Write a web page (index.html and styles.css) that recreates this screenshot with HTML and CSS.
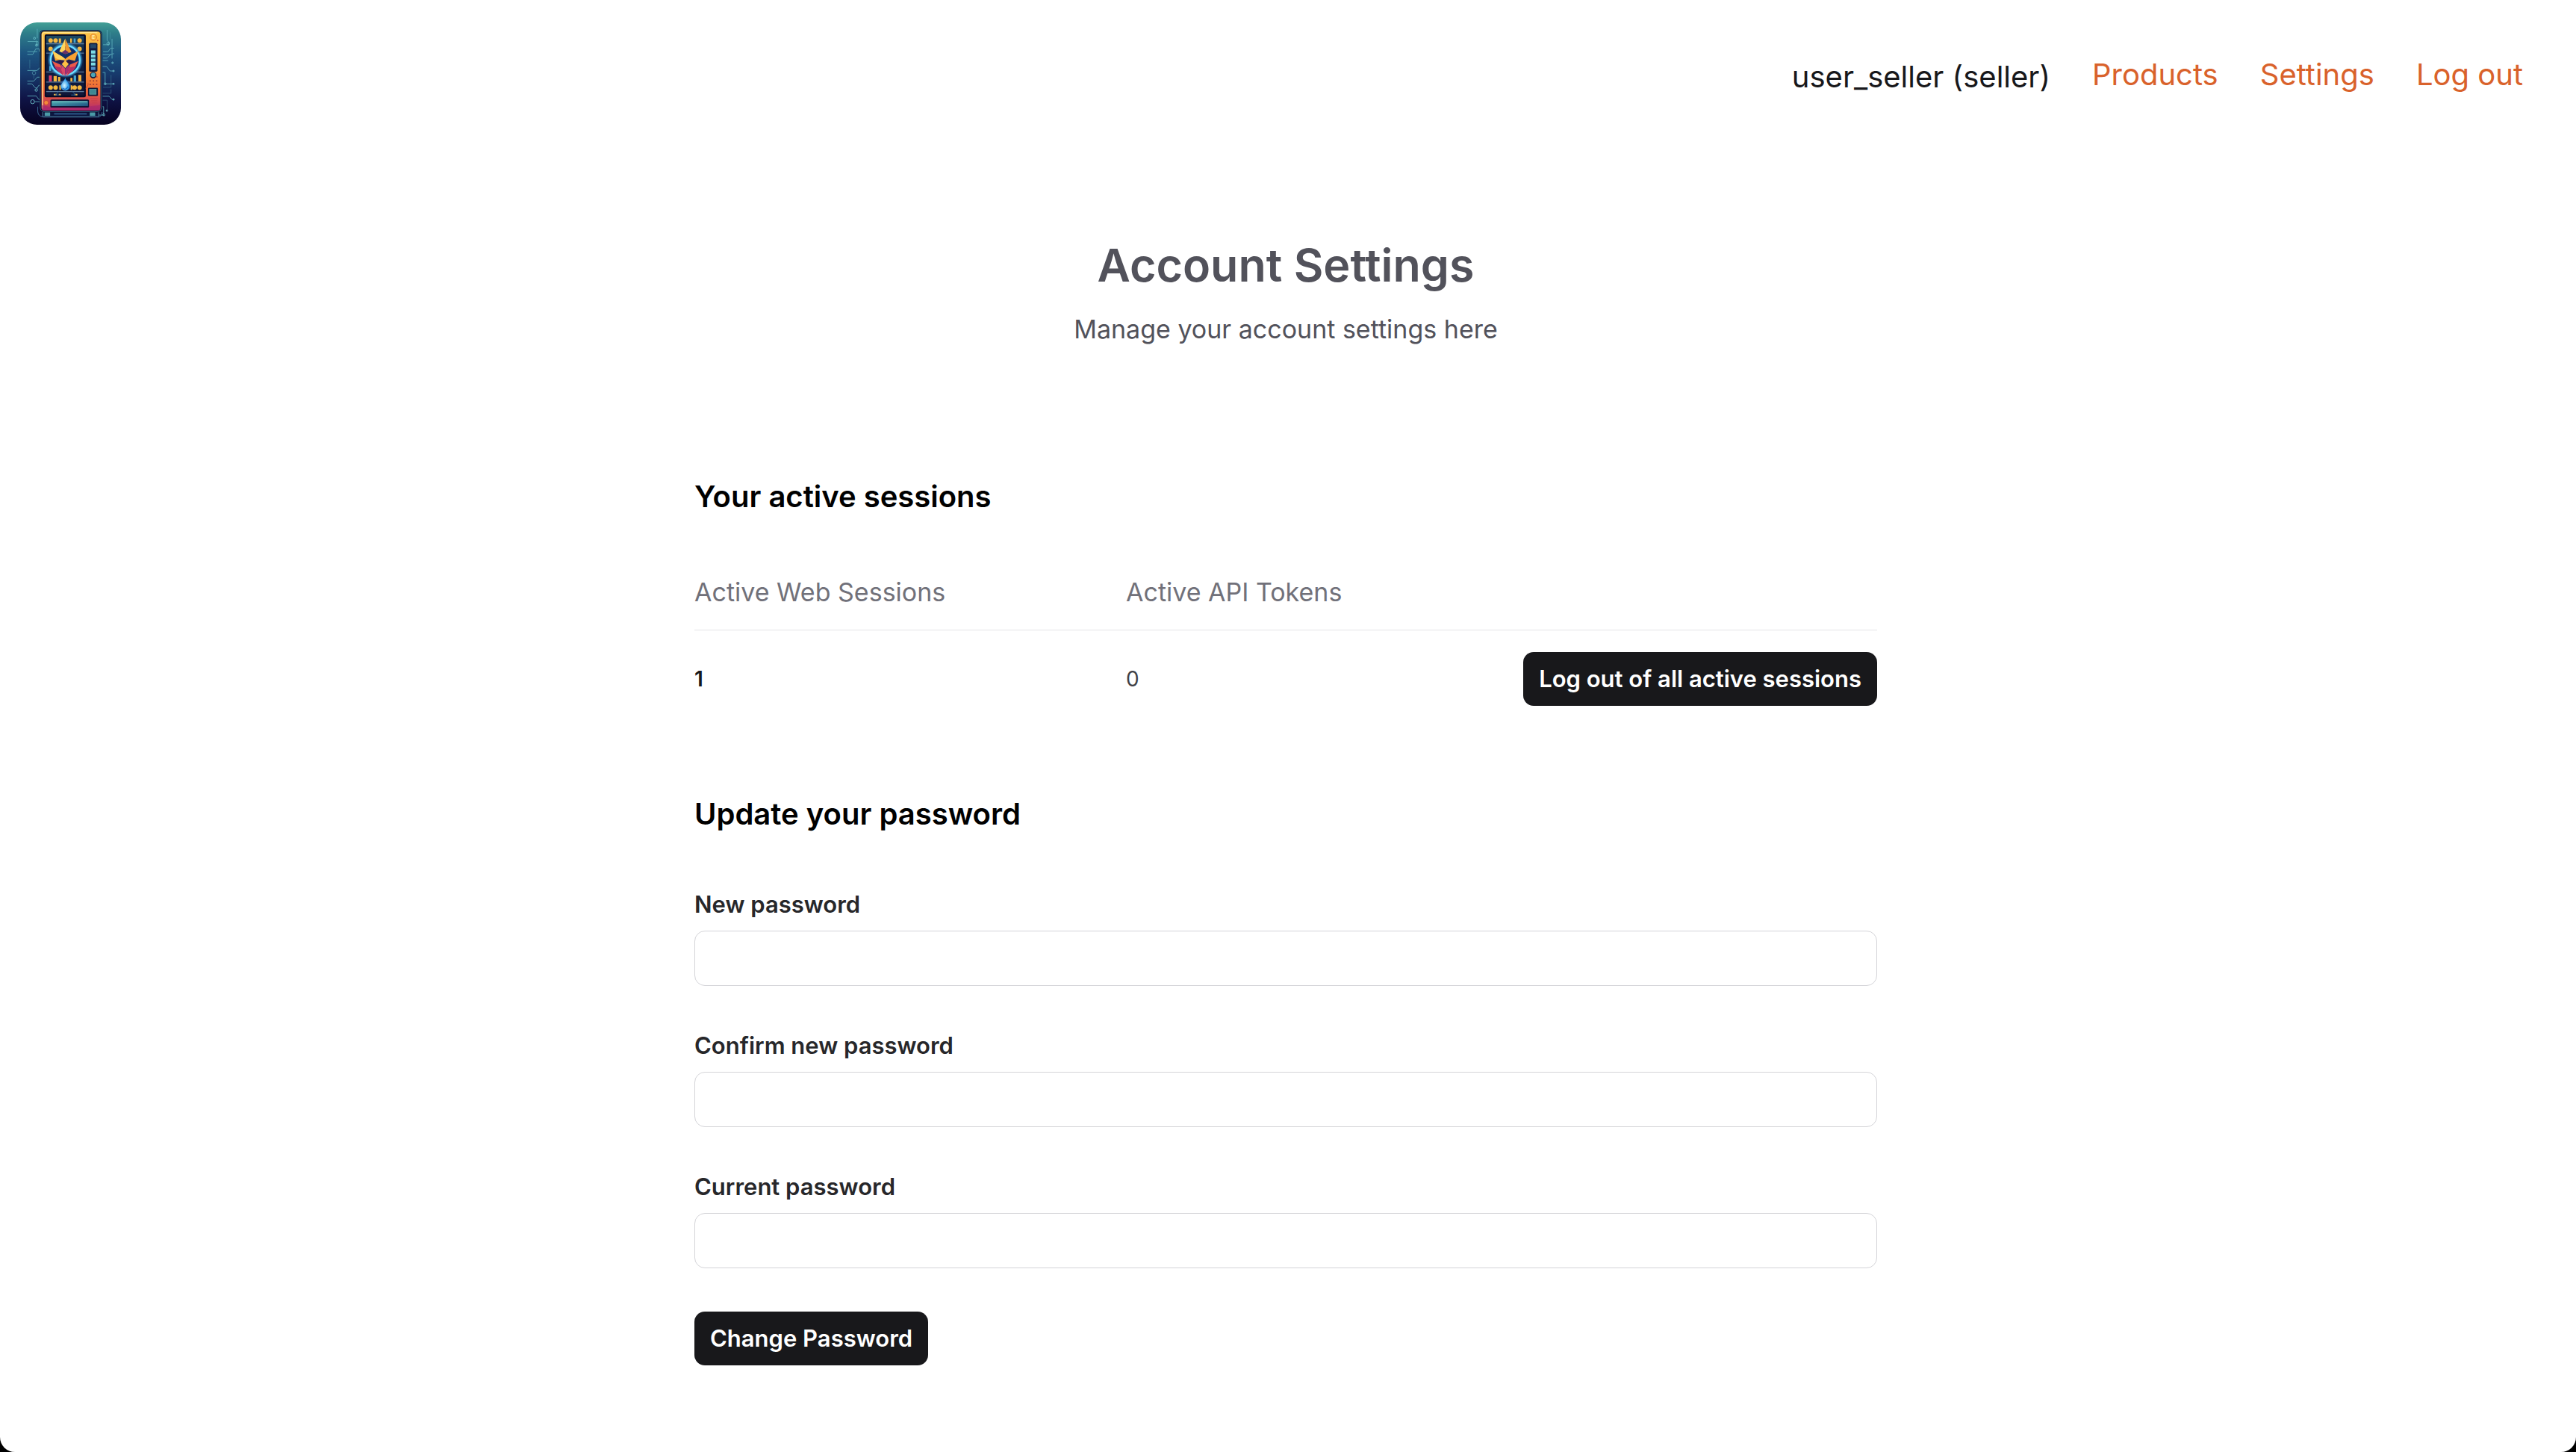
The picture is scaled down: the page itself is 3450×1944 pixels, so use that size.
FILE: index.html
```html
<!DOCTYPE html>
<html lang="en">
<head>
<meta charset="utf-8">
<meta name="viewport" content="width=device-width, initial-scale=1">
<title>Account Settings</title>
<link rel="stylesheet" href="styles.css">
</head>
<body>
<div class="page">
  <header class="site-header">
    <a class="logo" href="#" aria-label="Home">
      <svg viewBox="79 90 407 413" aria-hidden="true">
        <defs>
          <linearGradient id="sky" x1="0" y1="0" x2="0" y2="1">
            <stop offset="0" stop-color="#43a096"/>
            <stop offset=".1" stop-color="#2f7f8a"/>
            <stop offset=".3" stop-color="#1d5580"/>
            <stop offset=".5" stop-color="#173a6c"/>
            <stop offset=".75" stop-color="#0f1345"/>
            <stop offset="1" stop-color="#06011f"/>
          </linearGradient>
          <linearGradient id="case" x1="0" y1="0" x2="0" y2="1">
            <stop offset="0" stop-color="#fcc648"/>
            <stop offset=".45" stop-color="#f79a35"/>
            <stop offset=".75" stop-color="#ef6536"/>
            <stop offset="1" stop-color="#b52a6b"/>
          </linearGradient>
          <linearGradient id="glass" x1="0" y1="0" x2="0" y2="1">
            <stop offset="0" stop-color="#1d4a63"/>
            <stop offset=".3" stop-color="#0d2043"/>
            <stop offset="1" stop-color="#101638"/>
          </linearGradient>
          <linearGradient id="slot" x1="0" y1="0" x2="1" y2="1">
            <stop offset="0" stop-color="#4fb3b5"/>
            <stop offset="1" stop-color="#1f4f80"/>
          </linearGradient>
          <radialGradient id="glow">
            <stop offset=".55" stop-color="#1c6fc4" stop-opacity=".75"/>
            <stop offset=".82" stop-color="#58d3ff"/>
            <stop offset="1" stop-color="#2a8fe0" stop-opacity="0"/>
          </radialGradient>
          <radialGradient id="drop" cx=".4" cy=".6">
            <stop offset="0" stop-color="#d5f5ff"/>
            <stop offset="1" stop-color="#2397ea"/>
          </radialGradient>
        </defs>
        <rect x="79" y="90" width="407" height="413" rx="68" fill="url(#sky)"/>
        <g fill="none" stroke="#5fb1bd" stroke-width="3" opacity=".85">
          <path d="M148 116v38M109 167h42v17M144 184v-20M108 219h22l12-22h14M108 208h40M156 208v-12M108 284h40l10-12M108 327h26l14-16h10M108 338h18l14 16h6M146 358l8-14h6M108 387h36l10 14h8M138 410h22"/>
          <path d="M430 120v42l10 10M414 180h24v-10M412 220h26l20-4M450 156v80M414 208h20l10-14h14M414 234h16l14-14M412 244h22M412 268h16l14 18h14M412 292h10v44M422 338h34M412 388h26l12 13h8M412 430h4v32M396 464h20"/>
          <path d="M118 240v36M134 300v18M414 352h32v-50M412 376h34v-16M412 404h18v40M442 130v30" opacity=".4"/>
        </g>
        <g fill="none" stroke="#69bcc6" stroke-width="3">
          <circle cx="137" cy="154" r="4"/><circle cx="145" cy="182" r="4"/><circle cx="144" cy="363" r="5"/><circle cx="129" cy="410" r="8"/><circle cx="135" cy="294" r="7" opacity=".5"/>
          <circle cx="434" cy="176" r="5"/><circle cx="452" cy="253" r="3"/><circle cx="456" cy="286" r="3"/><circle cx="422" cy="338" r="4"/><circle cx="456" cy="338" r="3"/><circle cx="456" cy="401" r="3"/><circle cx="429" cy="446" r="3"/><circle cx="417" cy="463" r="4"/>
        </g>
        <path d="M150 430v18q0 20 22 24h226q12-4 12-20" fill="none" stroke="#3a6a93" stroke-width="3"/>
        <rect x="170" y="448" width="226" height="23" rx="4" fill="#0c1740" stroke="#5188a4" stroke-width="3"/>
        <rect x="178" y="451" width="22" height="16" fill="#4b9aa8"/><rect x="360" y="451" width="22" height="16" fill="#4b9aa8"/>
        <path d="M216 459h132" stroke="#294f80" stroke-width="7"/>
        <rect x="157" y="120" width="253" height="333" rx="18" fill="#0a0d2c"/>
        <rect x="160" y="123" width="247" height="327" rx="16" fill="none" stroke="#3f86a2" stroke-width="2"/>
        <rect x="165" y="127" width="238" height="319" rx="12" fill="url(#case)"/>
        <path d="M169 438V140q0-9 10-9h212" fill="none" stroke="#ffe18a" stroke-width="4"/>
        <path d="M166 424q70 22 236 0v14q0 8-12 8H178q-12 0-12-8z" fill="#a32770" opacity=".6"/>
        <rect x="178" y="138" width="166" height="254" rx="6" fill="#070a25"/>
        <rect x="184" y="144" width="153" height="241" fill="url(#glass)"/>
        <path d="M184 176h153M184 214h153M184 290h153M184 331h153M184 369h153" stroke="#5a7899" stroke-width="4"/>
        <g fill="#f4b73f">
          <circle cx="202" cy="163" r="9"/><circle cx="222" cy="163" r="9"/><circle cx="319" cy="163" r="9"/>
          <circle cx="202" cy="197" r="9"/><circle cx="319" cy="197" r="9"/>
          <circle cx="202" cy="353" r="9"/><circle cx="222" cy="353" r="9"/><circle cx="299" cy="353" r="9"/><circle cx="319" cy="353" r="9"/>
          <path d="M235 155h9v18h-9zM281 155h7v17h-7zM214 306h13v22h-13zM232 310h9v18h-9zM314 302h12v26h-12zM282 314h8v14h-8zM237 344h7v18h-7zM283 344h7v18h-7zM215 379h12v6h-12zM235 379h8v6h-8zM298 379h12v6h-12z"/>
        </g>
        <path d="M295 155h8v17h-8zM295 304h10v25h-10zM196 266h8v20h-8z" fill="#45a4cf"/>
        <path d="M195 304h12v25h-12z" fill="#df3e68"/>
        <circle cx="261" cy="242" r="72" fill="url(#glow)"/>
        <circle cx="261" cy="242" r="55" fill="#112f69"/>
        <circle cx="261" cy="242" r="59" fill="none" stroke="#70ddff" stroke-width="6"/>
        <path d="M261 155l-24 52 24 10z" fill="#ffd75b"/><path d="M261 155l25 55-25 7z" fill="#ee982e"/>
        <path d="M246 211l15-10 15 10-15 8z" fill="#693267"/>
        <path d="M208 246l34 14 14 46-26-20zM314 246l-34 14-14 46 26-20z" fill="#ed5949"/>
        <path d="M215 266l28 6 9 30-22-16zM307 266l-28 6-9 30 22-16z" fill="#b32f65"/>
        <path d="M210 205l40 24 11 9 11-9 41-24-13 40-25-6-14 8-14-8-26 6z" fill="#f9a232"/>
        <path d="M210 205l40 24 11 9-14 5-25-8z" fill="#ffd15a"/>
        <path d="M224 248l23-6 14 10 14-10 23 6-20 9-17-6-17 6z" fill="#321947"/>
        <path d="M261 243l-14 15 14 17 14-17z" fill="#ffc044"/>
        <path d="M245 260l16 17v31l-14-22z" fill="#db476a"/><path d="M277 260l-16 17v31l14-22z" fill="#a92d71"/>
        <circle cx="262" cy="344" r="22" fill="#257bce" opacity=".45"/>
        <path d="M261 314c5 15 17 22 17 34a17 17 0 0 1-34 0c0-12 12-19 17-34z" fill="url(#drop)"/>
        <path d="M250 355q12 12 22-6" fill="none" stroke="#176dc4" stroke-width="4"/>
        <path d="M234 369l-12 14h18M290 369l13 14h-18" fill="none" stroke="#25639a" stroke-width="3"/>
        <circle cx="375" cy="150" r="13" fill="#f9b540" stroke="#dd8134" stroke-width="3"/>
        <text x="375" y="157" class="logo-mark">E</text>
        <circle cx="392" cy="163" r="3" fill="#d95b35"/>
        <rect x="357" y="173" width="34" height="116" rx="5" fill="#101a3e"/>
        <rect x="362" y="178" width="24" height="16" fill="#24476a"/>
        <g fill="#7bdbe5"><rect x="365" y="203" width="18" height="13"/><rect x="365" y="220" width="18" height="12"/><rect x="365" y="236" width="18" height="12"/><rect x="365" y="252" width="18" height="12"/></g>
        <rect x="365" y="269" width="18" height="13" fill="#4e8fc9"/>
        <circle cx="374" cy="303" r="13" fill="#101a3e"/><circle cx="374" cy="302" r="9" fill="#4da5b6"/><circle cx="389" cy="310" r="3" fill="#d7472f"/>
        <g fill="#993e36"><circle cx="362" cy="326" r="3"/><circle cx="375" cy="326" r="3"/><circle cx="388" cy="326" r="3"/><circle cx="362" cy="340" r="3"/><circle cx="375" cy="340" r="3"/><circle cx="388" cy="340" r="3"/></g>
        <rect x="353" y="354" width="40" height="33" rx="4" fill="#101737"/><rect x="359" y="360" width="27" height="20" fill="#3e8792" stroke="#67b2ab" stroke-width="2"/>
        <path d="M353 335v8l-10 14" fill="none" stroke="#a24636" stroke-width="2"/>
        <path d="M362 397h30M366 406h24M370 415h20" stroke="#c93d4c" stroke-width="3"/>
        <circle cx="184" cy="414" r="9" fill="#f5893a" stroke="#c74b37" stroke-width="3"/>
        <rect x="201" y="401" width="156" height="33" rx="5" fill="#101438"/>
        <rect x="206" y="407" width="147" height="21" rx="2" fill="url(#slot)"/>
        <path d="M208 410h142" stroke="#82d1cc" stroke-width="3"/>
      </svg>
    </a>
    <nav class="nav" aria-label="Main">
      <span class="nav-user">user_seller (seller)</span>
      <a class="nav-link" href="#">Products</a>
      <a class="nav-link" href="#">Settings</a>
      <a class="nav-link" href="#">Log out</a>
    </nav>
  </header>

  <main class="content">
    <div class="intro">
      <h1 class="intro-title">Account Settings</h1>
      <p class="intro-text">Manage your account settings here</p>
    </div>

    <section class="sessions">
      <h2 class="section-title">Your active sessions</h2>
      <table class="session-table">
        <thead>
          <tr><th scope="col">Active Web Sessions</th><th scope="col">Active API Tokens</th><td></td></tr>
        </thead>
        <tbody>
          <tr>
            <td class="web-count">1</td>
            <td>0</td>
            <td class="session-action"><button class="button" type="button">Log out of all active sessions</button></td>
          </tr>
        </tbody>
      </table>
    </section>

    <section class="password">
      <h2 class="section-title">Update your password</h2>
      <form class="password-form">
        <div class="field">
          <label for="new-password">New password</label>
          <input id="new-password" type="password" autocomplete="new-password">
        </div>
        <div class="field">
          <label for="confirm-password">Confirm new password</label>
          <input id="confirm-password" type="password" autocomplete="new-password">
        </div>
        <div class="field">
          <label for="current-password">Current password</label>
          <input id="current-password" type="password" autocomplete="current-password">
        </div>
        <button class="button" type="submit">Change Password</button>
      </form>
    </section>
  </main>
</div>
</body>
</html>
```
FILE: styles.css
```css
*, *::before, *::after {
  box-sizing: border-box;
}

html {
  background: #000;
}

body {
  margin: 0;
  font-family: Inter, "Liberation Sans", sans-serif;
  color: #18181b;
}

h1, h2, p {
  margin: 0;
}

.page {
  min-height: 100vh;
  padding-right: 6px;
  background: #fff;
  border-radius: 0 0 20px 20px;
}

/* Header */
.site-header {
  display: flex;
  align-items: center;
  justify-content: space-between;
  padding: 30px 65px 30px 27px;
}

.logo svg {
  display: block;
  width: 135px;
  height: 137px;
}

.logo-mark {
  font-size: 19px;
  font-weight: 700;
  fill: #fff0b0;
  text-anchor: middle;
}

.nav {
  display: flex;
  align-items: center;
  gap: 56px;
  padding-top: 8px;
  font-size: 40px;
  line-height: 48px;
}

.nav-link {
  padding-bottom: 6px;
  color: #d9622b;
  text-decoration: none;
}

/* Main column */
.content {
  max-width: 1584px;
  margin: 0 auto;
  padding: 122px 0 96px;
}

.intro {
  display: grid;
  gap: 26px;
  margin-bottom: 176px;
  text-align: center;
  color: #52525b;
}

.intro-title {
  font-size: 61px;
  font-weight: 600;
  line-height: 72px;
}

.intro-text {
  font-size: 34px;
  line-height: 48px;
}

.section-title {
  font-size: 40px;
  font-weight: 600;
  line-height: 48px;
  color: #000;
}

/* Sessions */
.sessions {
  margin-bottom: 92px;
}

.session-table {
  width: 100%;
  margin-top: 56px;
  table-layout: fixed;
  border-collapse: collapse;
  font-size: 28px;
  line-height: 44px;
  color: #3f3f46;
}

.session-table th {
  padding: 24px 0 26px;
  font-size: 34px;
  font-weight: 400;
  line-height: 48px;
  text-align: left;
  color: #71717a;
}

.session-table th:first-child {
  width: 578px;
}

.session-table thead {
  border-bottom: 1px solid #e4e4e7;
}

.session-table td {
  padding: 0;
}

.session-table tbody td {
  padding: 29px 0;
}

.session-table .web-count {
  font-weight: 600;
  color: #18181b;
}

.session-action {
  text-align: right;
  white-space: nowrap;
}

.button {
  display: inline-block;
  height: 72px;
  padding: 0 21px;
  border: 0;
  border-radius: 14px;
  background: #18181b;
  color: #fff;
  font: 600 31px/44px Inter, "Liberation Sans", sans-serif;
  vertical-align: middle;
}

/* Password form */
.password-form {
  display: grid;
  gap: 58px;
  justify-items: start;
  margin-top: 75px;
}

.field {
  display: grid;
  gap: 13px;
  width: 100%;
}

.field label {
  font-size: 31px;
  font-weight: 600;
  line-height: 44px;
  color: #27272a;
}

.field input {
  width: 100%;
  height: 74px;
  padding: 0 22px;
  border: 1px solid #d4d4d8;
  border-radius: 14px;
  background: #fff;
  color: #18181b;
  font: 400 31px/44px Inter, "Liberation Sans", sans-serif;
}
```
